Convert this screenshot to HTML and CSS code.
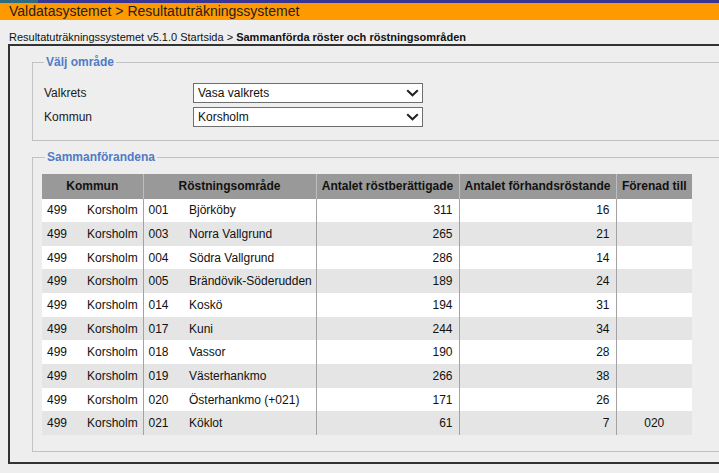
FILE: index.html
```html
<!DOCTYPE html>
<html lang="sv">
<head>
<meta charset="utf-8">
<title>Sammanförda röster och röstningsområden</title>
<link rel="stylesheet" href="styles.css">
</head>
<body>
<div class="topstrip"></div>
<div class="titlebar">Valdatasystemet &gt; Resultatuträkningssystemet</div>
<div class="crumbs">Resultatuträkningssystemet v5.1.0 Startsida &gt; <b>Sammanförda röster och röstningsområden</b></div>
<div class="panel">
  <fieldset class="group area">
    <legend>Välj område</legend>
    <div class="formrow">
      <label class="lbl">Valkrets</label>
      <div class="select"><span>Vasa valkrets</span><svg class="chev" width="13" height="8" viewBox="0 0 13 8"><path d="M1.2 1.2 L6.5 6.3 L11.8 1.2" fill="none" stroke="#222" stroke-width="2"/></svg></div>
    </div>
    <div class="formrow">
      <label class="lbl">Kommun</label>
      <div class="select"><span>Korsholm</span><svg class="chev" width="13" height="8" viewBox="0 0 13 8"><path d="M1.2 1.2 L6.5 6.3 L11.8 1.2" fill="none" stroke="#222" stroke-width="2"/></svg></div>
    </div>
  </fieldset>
  <fieldset class="group merged">
    <legend>Sammanförandena</legend>
    <table class="grid">
      <colgroup>
        <col class="c1"><col class="c2"><col class="c3"><col class="c4"><col class="c5"><col class="c6"><col class="c7">
      </colgroup>
      <thead>
        <tr>
          <th colspan="2" class="sep">Kommun</th>
          <th colspan="2" class="sep">Röstningsområde</th>
          <th class="sep">Antalet röstberättigade</th>
          <th class="sep">Antalet förhandsröstande</th>
          <th>Förenad till</th>
        </tr>
      </thead>
      <tbody>
        <tr><td>499</td><td class="sep">Korsholm</td><td>001</td><td class="sep">Björköby</td><td class="num sep">311</td><td class="num sep">16</td><td class="ctr"></td></tr>
        <tr><td>499</td><td class="sep">Korsholm</td><td>003</td><td class="sep">Norra Vallgrund</td><td class="num sep">265</td><td class="num sep">21</td><td class="ctr"></td></tr>
        <tr><td>499</td><td class="sep">Korsholm</td><td>004</td><td class="sep">Södra Vallgrund</td><td class="num sep">286</td><td class="num sep">14</td><td class="ctr"></td></tr>
        <tr><td>499</td><td class="sep">Korsholm</td><td>005</td><td class="sep">Brändövik-Söderudden</td><td class="num sep">189</td><td class="num sep">24</td><td class="ctr"></td></tr>
        <tr><td>499</td><td class="sep">Korsholm</td><td>014</td><td class="sep">Koskö</td><td class="num sep">194</td><td class="num sep">31</td><td class="ctr"></td></tr>
        <tr><td>499</td><td class="sep">Korsholm</td><td>017</td><td class="sep">Kuni</td><td class="num sep">244</td><td class="num sep">34</td><td class="ctr"></td></tr>
        <tr><td>499</td><td class="sep">Korsholm</td><td>018</td><td class="sep">Vassor</td><td class="num sep">190</td><td class="num sep">28</td><td class="ctr"></td></tr>
        <tr><td>499</td><td class="sep">Korsholm</td><td>019</td><td class="sep">Västerhankmo</td><td class="num sep">266</td><td class="num sep">38</td><td class="ctr"></td></tr>
        <tr><td>499</td><td class="sep">Korsholm</td><td>020</td><td class="sep">Österhankmo (+021)</td><td class="num sep">171</td><td class="num sep">26</td><td class="ctr"></td></tr>
        <tr><td>499</td><td class="sep">Korsholm</td><td>021</td><td class="sep">Köklot</td><td class="num sep">61</td><td class="num sep">7</td><td class="ctr">020</td></tr>
      </tbody>
    </table>
  </fieldset>
</div>
</body>
</html>
```
FILE: styles.css
```css
html, body {
  margin: 0;
  padding: 0;
  background: #eeeeee;
  overflow: hidden;
}
body {
  font-family: "Liberation Sans", Arial, sans-serif;
  font-size: 12px;
  color: #111;
  width: 719px;
  height: 473px;
}
.topstrip {
  height: 3px;
  background: linear-gradient(to right, #2e6b80 0, #2e6b80 38px, #383594 38px, #383594 100%);
}
.titlebar {
  height: 17px;
  line-height: 17px;
  background: #ff9900;
  font-size: 14px;
  color: #1e1e1e;
  padding-left: 9px;
  white-space: nowrap;
}
.crumbs {
  font-size: 11px;
  line-height: 13px;
  padding: 11px 0 0 9px;
  height: 13px;
  color: #111;
  white-space: nowrap;
}
.crumbs b {
  color: #111;
}
.panel {
  margin-left: 8px;
  width: 760px;
  height: 420px;
  border: 2px solid #333333;
  box-sizing: border-box;
  padding: 0 20px 0 22px;
}
.group {
  border: 1px solid #c2c2c2;
  margin: 0;
  min-width: 0;
}
.group legend {
  font-weight: bold;
  font-size: 12px;
  line-height: 15px;
  color: #4f7bc6;
  padding: 0 2px;
}
.area {
  margin-top: 9px;
  padding: 13px 0 13px 11px;
}
.formrow {
  display: flex;
  align-items: center;
  height: 20px;
  margin-bottom: 4px;
}
.formrow:last-child {
  margin-bottom: 0;
}
.lbl {
  width: 149px;
  color: #1a1a1a;
}
.select {
  width: 230px;
  height: 20px;
  box-sizing: border-box;
  border: 1px solid #6f6f6f;
  background: #ffffff;
  display: flex;
  align-items: center;
  justify-content: space-between;
  padding: 0 3px 0 4px;
  color: #111;
}
.chev {
  display: block;
}
.merged {
  margin-top: 9px;
  padding: 9px 0 16px 9px;
}
.merged legend {
  margin-left: 3px;
}
.grid {
  border-collapse: collapse;
  table-layout: fixed;
  width: 650px;
}
.c1 { width: 40px; }
.c2 { width: 61px; }
.c3 { width: 41px; }
.c4 { width: 132px; }
.c5 { width: 143px; }
.c6 { width: 157px; }
.c7 { width: 76px; }
.grid th {
  background: #999999;
  height: 24.5px;
  padding: 0;
  font-weight: bold;
  color: #111;
  text-align: center;
  white-space: nowrap;
}
.grid th.sep {
  border-right: 1px solid #bdbdbd;
}
.grid td {
  height: 23.67px;
  padding: 0 0 0 5px;
  white-space: nowrap;
  color: #111;
}
.grid td.sep {
  border-right: 1px solid #a3a3a3;
}
.grid td.num {
  text-align: right;
  padding: 0 6px 0 0;
}
.grid td.ctr {
  text-align: center;
  padding: 0;
}
.grid tbody tr:nth-child(odd) {
  background: #ffffff;
}
.grid tbody tr:nth-child(even) {
  background: #e5e5e5;
}
```
